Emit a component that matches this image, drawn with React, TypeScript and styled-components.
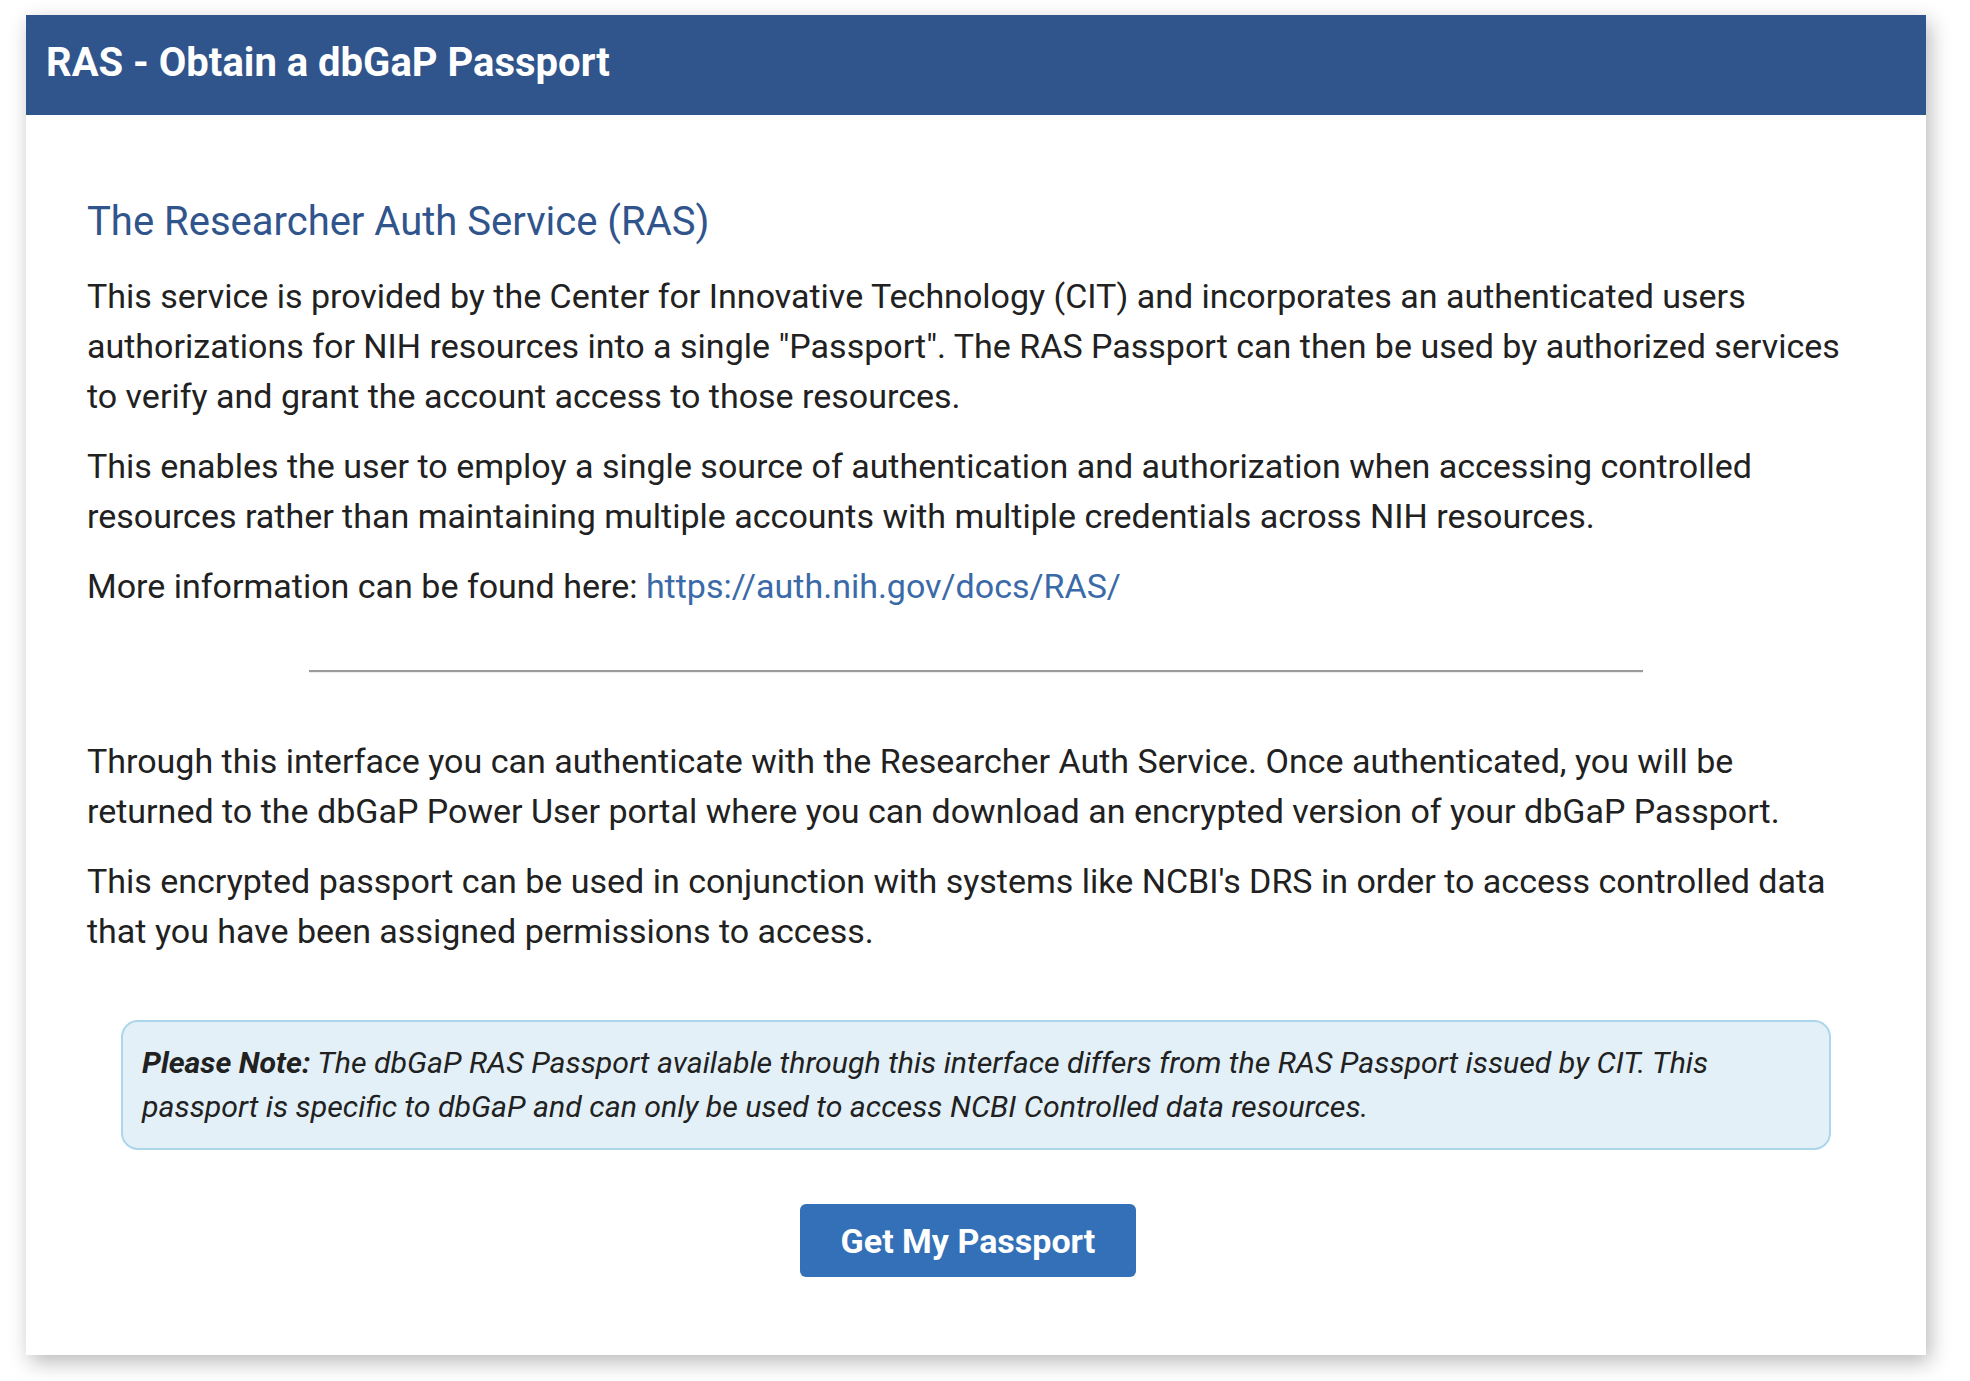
import React from "react";
import styled, { createGlobalStyle } from "styled-components";

const GlobalStyle = createGlobalStyle`
  html, body {
    margin: 0;
    padding: 0;
    background: #ffffff;
  }
  body {
    font-family: Roboto, "Liberation Sans", Arial, sans-serif;
    color: #212121;
  }
  * { box-sizing: border-box; }
`;

const Page = styled.div`
  padding: 15px 44px 25px 26px;
`;

const Card = styled.section`
  background: #ffffff;
  box-shadow: 4px 7px 20px rgba(0, 0, 0, 0.28);
  display: flex;
  flex-direction: column;
`;

const Header = styled.header`
  height: 100px;
  background: #30548c;
  display: flex;
  align-items: center;
  padding: 0 20px 4px;
`;

const HeaderTitle = styled.h1`
  margin: 0;
  color: #ffffff;
  font-size: 40px;
  font-weight: 700;
  line-height: 48px;
`;

const Body = styled.div`
  padding: 88px 61px 78px;
  display: flex;
  flex-direction: column;
`;

const Title = styled.h2`
  margin: 0 0 30px;
  color: #30548c;
  font-size: 40px;
  font-weight: 400;
  line-height: 38px;
`;

const Paragraph = styled.p`
  margin: 0 0 20px;
  font-size: 34px;
  line-height: 50px;
  color: #212121;
  &:last-of-type {
    margin-bottom: 0;
  }
`;

const Section = styled.div`
  display: flex;
  flex-direction: column;
  padding-right: 12px;
`;

const Link = styled.a`
  color: #3a6aa8;
  text-decoration: none;
`;

const Divider = styled.hr`
  width: 75%;
  height: 0;
  margin: 59px auto 63px;
  border: 0;
  border-top: 2px solid #9b9b9b;
  border-bottom: 1px solid #ececec;
`;

const Note = styled.div`
  margin: 64px 34px 0;
  padding: 19px 18px 19px 19px;
  background: #e3f0f7;
  border: 2px solid #acd6ea;
  border-radius: 17px;
  font-size: 30.3px;
  line-height: 44px;
  font-style: italic;
  color: #212121;
`;

const Strong = styled.strong`
  font-weight: 700;
`;

const Actions = styled.div`
  display: flex;
  justify-content: center;
  margin-top: 54px;
  padding-right: 16px;
`;

const Button = styled.button`
  height: 73px;
  padding: 0 41px;
  border: 0;
  border-radius: 6px;
  background: #3370b7;
  color: #ffffff;
  font-family: Roboto, "Liberation Sans", Arial, sans-serif;
  font-size: 34px;
  font-weight: 700;
  cursor: pointer;
`;

export default function App() {
  return (
    <>
      <GlobalStyle />
      <Page>
        <Card>
          <Header>
            <HeaderTitle>RAS - Obtain a dbGaP Passport</HeaderTitle>
          </Header>
          <Body>
            <Title>The Researcher Auth Service (RAS)</Title>
            <Section>
              <Paragraph>
                This service is provided by the Center for Innovative Technology (CIT) and incorporates an
                authenticated users authorizations for NIH resources into a single "Passport". The RAS Passport
                can then be used by authorized services to verify and grant the account access to those resources.
              </Paragraph>
              <Paragraph>
                This enables the user to employ a single source of authentication and authorization when
                accessing controlled resources rather than maintaining multiple accounts with multiple
                credentials across NIH resources.
              </Paragraph>
              <Paragraph>
                More information can be found here:{" "}
                <Link href="#">https://auth.nih.gov/docs/RAS/</Link>
              </Paragraph>
            </Section>
            <Divider />
            <Section>
              <Paragraph>
                Through this interface you can authenticate with the Researcher Auth Service. Once
                authenticated, you will be returned to the dbGaP Power User portal where you can download an
                encrypted version of your dbGaP Passport.
              </Paragraph>
              <Paragraph>
                This encrypted passport can be used in conjunction with systems like NCBI's DRS in order to
                access controlled data that you have been assigned permissions to access.
              </Paragraph>
            </Section>
            <Note>
              <Strong>Please Note:</Strong> The dbGaP RAS Passport available through this interface differs from
              the RAS Passport issued by CIT. This passport is specific to dbGaP and can only be used to access
              NCBI Controlled data resources.
            </Note>
            <Actions>
              <Button type="button">Get My Passport</Button>
            </Actions>
          </Body>
        </Card>
      </Page>
    </>
  );
}
